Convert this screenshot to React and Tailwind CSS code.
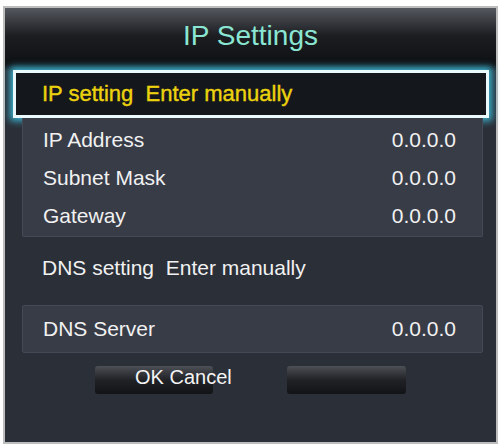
import React from "react";

// IP Settings dialog (TV menu style)
const rows = [
  { label: "IP Address", value: "0.0.0.0" },
  { label: "Subnet Mask", value: "0.0.0.0" },
  { label: "Gateway", value: "0.0.0.0" },
];

function App() {
  return (
    <div
      className="w-[501px] h-[445px] bg-white overflow-hidden"
      style={{ fontFamily: '"Liberation Sans", Arial, sans-serif' }}
    >
      <div className="ml-[3px] mt-[6px] w-[495px] h-[438px] border-2 border-[#bdbdbd] bg-[#2b2f38] flex flex-col">
        {/* title */}
        <div className="h-[56px] shrink-0 flex items-center justify-center bg-gradient-to-b from-[#55585e] via-[#1b1d21] to-[#0f1114]">
          <span className="text-[28px] leading-none text-[#8ae6d2]">IP Settings</span>
        </div>

        <div className="h-[6px] bg-gradient-to-b from-[#0f1114] to-[#1d2a33]" />

        {/* selected row */}
        <div className="ml-[8px] w-[476px] h-[48px] shrink-0 border-[3px] border-[#e9f9fc] bg-[#14171c] flex items-center pl-[26px] shadow-[0_0_7px_3px_#3bb4cf]">
          <span className="text-[22px] leading-none text-[#ecd20e] whitespace-pre [-webkit-text-stroke:0.4px_#ecd20e]">
            IP setting  Enter manually
          </span>
        </div>

        {/* address panel */}
        <div className="ml-[17px] w-[461px] h-[119px] shrink-0 bg-[#383c47] border-x border-b border-[#454955] rounded-b-[2px] pt-[3px] pl-[20px] pr-[26px]">
          {rows.map((r) => (
            <div key={r.label} className="h-[38px] flex items-center justify-between text-[21px] text-[#f1f1f1]">
              <span>{r.label}</span>
              <span>{r.value}</span>
            </div>
          ))}
        </div>

        <div className="h-[62px] shrink-0 flex items-center pl-[37px] text-[21px] text-[#f1f1f1] whitespace-pre">
          DNS setting  Enter manually
        </div>

        <div className="mt-[6px] ml-[17px] w-[461px] h-[48px] shrink-0 bg-[#383c47] border border-[#454955] rounded-[2px] flex items-center justify-between pl-[20px] pr-[26px] text-[21px] text-[#f1f1f1]">
          <span>DNS Server</span>
          <span>0.0.0.0</span>
        </div>

        {/* buttons */}
        <div className="relative mt-[13px] flex justify-center gap-[74px]">
          <div className="w-[118px] h-[28px] rounded-[3px] bg-gradient-to-b from-[#4d5056] via-[#202226] to-[#121316]" />
          <div className="w-[119px] h-[28px] rounded-[3px] bg-gradient-to-b from-[#4d5056] via-[#202226] to-[#121316]" />
          <span className="absolute left-[130px] top-[1px] text-[20px] leading-[20px] text-[#f4f4f4]">
            OK Cancel
          </span>
        </div>
      </div>
    </div>
  );
}

export default App;
